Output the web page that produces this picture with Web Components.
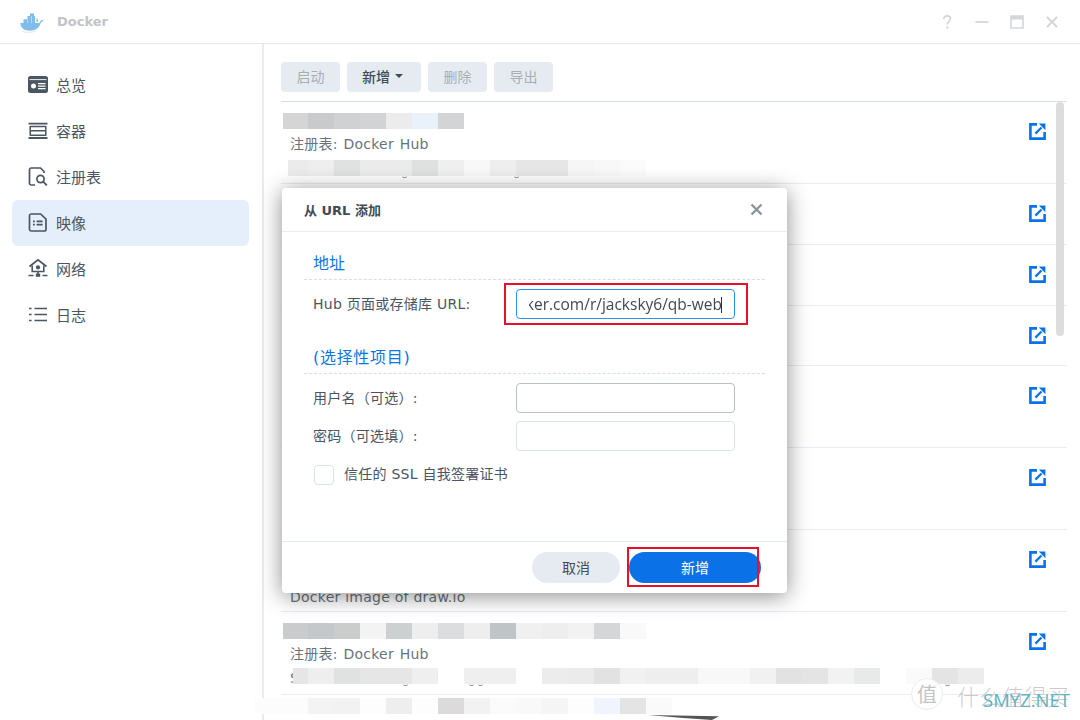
<!DOCTYPE html>
<html lang="zh">
<head>
<meta charset="utf-8">
<title>Docker</title>
<style>
  html, body { margin: 0; padding: 0; background: #fff; }
</style>
</head>
<body>
<docker-app>
  <dsm-titlebar slot="title"></dsm-titlebar>
  <dsm-sidebar slot="side">
    <nav-item icon="overview">总览</nav-item>
    <nav-item icon="container">容器</nav-item>
    <nav-item icon="registry">注册表</nav-item>
    <nav-item icon="image" active>映像</nav-item>
    <nav-item icon="network">网络</nav-item>
    <nav-item icon="log">日志</nav-item>
  </dsm-sidebar>
  <image-panel slot="main">
    <tool-btn disabled>启动</tool-btn>
    <tool-btn menu>新增</tool-btn>
    <tool-btn disabled>删除</tool-btn>
    <tool-btn disabled>导出</tool-btn>

    <image-row slot="rows" style="height:82px">
      <mosaic-bar slot="name" shift="-7" lead="25" cells="#d5d5d5,#c8cacc,#d0d1d2,#d2d3d4,#ececec,#e9f1fb,#d3d4d5"></mosaic-bar>
      <span slot="registry" style="word-spacing:1px">注册表: Docker Hub</span>
      <mosaic-bar slot="desc" shift="-2" lead="20" specks="114,226" cells="#ebebeb,#eeeeee,#e0e1e1,#ebebeb,#ebebeb,#dfe0e0,#efefef,#f8f8f8,#eeeeee,#e6e6e6,#e6e6e6,#f6f6f6,#f8f8f8,#fbfbfb"></mosaic-bar>
    </image-row>
    <image-row slot="rows" style="height:61px"></image-row>
    <image-row slot="rows" style="height:61px"></image-row>
    <image-row slot="rows" style="height:60px"></image-row>
    <image-row slot="rows" style="height:82px"></image-row>
    <image-row slot="rows" style="height:82px"></image-row>
    <image-row slot="rows" style="height:82px">
      <span slot="desc" style="display:block;padding-top:2px">Docker image of draw.io</span>
    </image-row>
    <image-row slot="rows" style="height:83px">
      <mosaic-bar slot="name" shift="-7" lead="25" style="margin-top:-1px" cells="#c9cbcc,#c4c8ca,#cbcdcd,#f3f3f3,#ccd0d1,#eeeeee,#dcddde,#eeeeee,#bfc4c6,#f0f0f0,#eeeeee,#f2f2f2,#d5d6d7,#f9f9f9"></mosaic-bar>
      <span slot="registry" style="word-spacing:1px">注册表: Docker Hub</span>
      <div slot="desc" style="display:flex">
        <span>S</span>
        <mosaic-bar shift="-6" lead="15" specks="110,176,185,640,652" cells="#e6e6e6,#eeeeee,#e0e2e2,#e6e6e6,#e6e6e6,#efefef,#ffffff,#efefef,#efefef,#ffffff,#ececec,#ebebeb,#e2e2e2,#f1f1f1,#eeeeee,#eeeeee,#f8f8f8,#f8f8f8,#f1f1f1,#e2e2e2,#e4e4e4,#f2f2f2,#e8e9e9,#ffffff,#fafafa,#e4e4e4,#ececec"></mosaic-bar>
      </div>
    </image-row>
    <mosaic-bar slot="rows" class="last" lead="53" cells="#fcfcfc,#f3f3f3,#f2f2f2,#fdfdfd,#eeeeee,#fdfdfd,#dcdadb,#f2f2f2,#fbfbfb,#f9f9f9,#f5f5f5,#fdfdfd,#f0f4fc,#e4e4e4,#fafafa"></mosaic-bar>
  </image-panel>
  <url-dialog slot="overlay"></url-dialog>
  <site-watermark slot="overlay"></site-watermark>
</docker-app>

<script>
const UI_FONT = `"DejaVu Sans", "Noto Sans CJK SC", sans-serif`;

const ICONS = {
  overview: `<rect x="1" y="2" width="20" height="17" rx="2.500" fill="#4b5663"/><path d="M2.500 5.600h17" stroke="#fff" stroke-width=".9" fill="none"/><circle cx="6.500" cy="12" r="2.500" fill="#fff"/><path d="M11 9.700h7.500M11 12.200h7.500M11 14.700h7.500" stroke="#fff" stroke-width="1.200" fill="none"/>`,
  container: `<path d="M1.500 3.600h19M1.500 18h19" stroke="#4b5663" stroke-width="1.800" fill="none"/><path d="M3.200 6v9.700M18.800 6v9.700" stroke="#4b5663" stroke-width="1.500" fill="none"/><path d="M3.200 6.500h15.600M3.200 10.800h15.600M3.200 15.200h15.600" stroke="#4b5663" stroke-width="1.600" fill="none"/>`,
  registry: `<path d="M8 19H4.200A1.700 1.700 0 0 1 2.500 17.300V3.700A1.700 1.700 0 0 1 4.200 2h9.300l3.500 3.500V7" fill="none" stroke="#4b5663" stroke-width="1.700"/><circle cx="13.500" cy="13" r="3.600" fill="none" stroke="#4b5663" stroke-width="1.700"/><path d="M16.200 15.700l3.600 3.600" stroke="#4b5663" stroke-width="1.900" fill="none"/>`,
  image: `<path d="M4.200 2h9.500L19 7.200v10.100a1.700 1.700 0 0 1-1.700 1.700H4.200a1.700 1.700 0 0 1-1.700-1.700V3.700A1.700 1.700 0 0 1 4.200 2z" fill="none" stroke="#4b5663" stroke-width="1.700"/><path d="M6 9.400h1.800M6 12.600h1.800M9.600 9.400h6M9.600 12.600h6" stroke="#4b5663" stroke-width="1.700" fill="none"/>`,
  network: `<path d="M2.500 8.500L11 1.800l8.500 6.700" fill="none" stroke="#4b5663" stroke-width="1.700"/><path d="M5.200 7.500v6h11.600v-6" fill="none" stroke="#4b5663" stroke-width="1.600"/><circle cx="11" cy="9.400" r="2.100" fill="#4b5663"/><path d="M11 13.500v3" stroke="#4b5663" stroke-width="1.700" fill="none"/><rect x="8.800" y="15.600" width="4.400" height="3.200" fill="#4b5663"/><path d="M1.500 17.400h5M15.500 17.400h5" stroke="#4b5663" stroke-width="1.500" fill="none"/>`,
  log: `<path d="M2 4.500h2.600M2 10.500h2.600M2 16.500h2.600M7.500 4.500h12.500M7.500 10.500h12.500M7.500 16.500h12.500" stroke="#4b5663" stroke-width="1.700" fill="none"/>`,
};

class DockerApp extends HTMLElement {
  constructor() {
    super();
    this.attachShadow({ mode: "open" });
  }
  connectedCallback() {
    this.shadowRoot.innerHTML = `
      <style>
        :host {
          display: flex;
          flex-direction: column;
          position: relative;
          width: 1080px;
          height: 720px;
          overflow: hidden;
          background: #fff;
          font-family: ${UI_FONT};
          color: #4a5561;
        }
        .body { display: flex; flex: 1; min-height: 0; }
      </style>
      <slot name="title"></slot>
      <div class="body">
        <slot name="side"></slot>
        <slot name="main"></slot>
      </div>
      <slot name="overlay"></slot>
    `;
  }
}

class DsmTitlebar extends HTMLElement {
  constructor() {
    super();
    this.attachShadow({ mode: "open" });
  }
  connectedCallback() {
    this.shadowRoot.innerHTML = `
      <style>
        :host {
          display: flex;
          align-items: center;
          box-sizing: border-box;
          height: 44px;
          padding: 0 21px 0 19px;
          border-bottom: 1px solid #e4e9f0;
        }
        .logo { width: 26px; height: 22px; margin-right: 12px; filter: blur(.4px); }
        .name { font-size: 13px; font-weight: 700; color: #bfc4c9; flex: 1; }
        .ctl { display: flex; gap: 21px; align-items: center; }
        .ctl svg { width: 14px; height: 14px; display: block; }
      </style>
      <svg class="logo" viewBox="0 0 26 22">
        <g fill="#80bdea">
          <path d="M1.200 12h18.600c.9-.2 1.500-.9 1.600-1.900.3-.9 1.400-.8 3.400-1.300-.6 1-1.800 2-3 2.900-1.300 4.900-5.200 8-11 8-5.400 0-8.700-2.200-9.600-7.700z"/>
          <path d="M4.500 8.200h3.600V12H4.500zM8.500 8.200h3.600V12H8.500zM12.500 8.200h3.600V12h-3.600zM8.500 5h3.600v3.200H8.500zM12.500 5h3.600v3.200h-3.600zM11 2.500h4v2.500h-4z"/>
          <path d="M17.500 7c1 .6 1.700 1.800 1.700 3.500l-1.700.8z"/>
        </g>
        <path d="M3 20.200c3 1.300 10 1.500 13.500 0" stroke="#e3e8ec" stroke-width="1.200" fill="none"/>
      </svg>
      <span class="name">Docker</span>
      <div class="ctl">
        <svg viewBox="0 0 14 14"><path d="M3.600 4.200C3.800 2.200 5.300 .8 7.200 .8c2 0 3.300 1.300 3.300 3 0 2.500-3.200 2.800-3.200 5.700" fill="none" stroke="#d4d7da" stroke-width="1.700"/><rect x="6.300" y="11.400" width="2" height="2.200" fill="#d4d7da"/></svg>
        <svg viewBox="0 0 14 14"><path d="M.5 7h13" stroke="#d4d7da" stroke-width="1.800"/></svg>
        <svg viewBox="0 0 14 14"><path d="M1 1h12v12H1z" fill="none" stroke="#d4d7da" stroke-width="1.600"/><rect x="1" y="1" width="12" height="3.500" fill="#d4d7da"/></svg>
        <svg viewBox="0 0 14 14"><path d="M2 2l10 10M12 2L2 12" stroke="#d4d7da" stroke-width="2"/></svg>
      </div>
    `;
  }
}

class DsmSidebar extends HTMLElement {
  constructor() {
    super();
    this.attachShadow({ mode: "open" });
  }
  connectedCallback() {
    this.shadowRoot.innerHTML = `
      <style>
        :host {
          display: flex;
          flex-direction: column;
          box-sizing: border-box;
          width: 264px;
          flex: none;
          padding: 18px 13px 0 12px;
          border-right: 2px solid #e7ecf2;
        }
      </style>
      <slot></slot>
    `;
  }
}

class NavItem extends HTMLElement {
  constructor() {
    super();
    this.attachShadow({ mode: "open" });
  }
  connectedCallback() {
    const icon = ICONS[this.getAttribute("icon")];
    this.shadowRoot.innerHTML = `
      <style>
        :host {
          display: flex;
          align-items: center;
          box-sizing: border-box;
          height: 46px;
          padding: 0 0 2px 15px;
          border-radius: 6px;
          font-size: 15px;
          color: #4a5561;
        }
        :host([active]) { background: #e4effb; }
        svg { width: 22px; height: 21px; margin-right: 7px; flex: none; }
      </style>
      <svg viewBox="0 0 22 21">${icon}</svg>
      <slot></slot>
    `;
  }
}

class ImagePanel extends HTMLElement {
  constructor() {
    super();
    this.attachShadow({ mode: "open" });
  }
  connectedCallback() {
    this.shadowRoot.innerHTML = `
      <style>
        :host {
          display: flex;
          flex-direction: column;
          position: relative;
          flex: 1;
          min-width: 0;
          padding: 0 13px 0 17px;
        }
        .toolbar {
          display: flex;
          gap: 7px;
          box-sizing: border-box;
          height: 58px;
          padding-top: 18px;
          border-bottom: 1px solid #d6e0ea;
        }
        .scroll {
          position: absolute;
          left: 792px;
          top: 58px;
          width: 8px;
          height: 234px;
          border-radius: 4px;
          background: #dddddd;
        }
      </style>
      <div class="toolbar"><slot></slot></div>
      <slot name="rows"></slot>
      <div class="scroll"></div>
    `;
  }
}

class ToolBtn extends HTMLElement {
  constructor() {
    super();
    this.attachShadow({ mode: "open" });
  }
  connectedCallback() {
    this.shadowRoot.innerHTML = `
      <style>
        :host {
          display: flex;
          align-items: center;
          justify-content: center;
          gap: 5px;
          box-sizing: border-box;
          width: 59px;
          height: 30px;
          padding-bottom: 2px;
          background: #e6ebf2;
          border-radius: 4px;
          font-size: 14px;
          font-weight: 500;
          color: #404b57;
        }
        :host([disabled]) { color: #a8aeb6; font-weight: 400; }
        :host([menu]) { width: 74px; padding-right: 3px; }
        .caret { display: none; width: 0; height: 0; border: 4px solid transparent; border-top: 4px solid #404b57; border-bottom: 0; }
        :host([menu]) .caret { display: block; }
      </style>
      <slot></slot><span class="caret"></span>
    `;
  }
}

class ImageRow extends HTMLElement {
  constructor() {
    super();
    this.attachShadow({ mode: "open" });
  }
  connectedCallback() {
    this.shadowRoot.innerHTML = `
      <style>
        :host {
          display: flex;
          box-sizing: border-box;
          padding: 11px 21px 0 9px;
          border-bottom: 1px solid #e8edf3;
          font-size: 14px;
          letter-spacing: .25px;
          color: #6a737c;
        }
        .text {
          flex: 1;
          min-width: 0;
          display: grid;
          grid-template-rows: 16px 20px 17px;
          row-gap: 5px;
          line-height: 20px;
          align-content: start;
          align-items: center;
        }
        svg { width: 17px; height: 17px; margin-top: 9.5px; flex: none; }
      </style>
      <div class="text">
        <div><slot name="name"></slot></div>
        <div><slot name="registry"></slot></div>
        <div><slot name="desc"></slot></div>
      </div>
      <svg viewBox="0 0 17 17">
        <path d="M8 1.400H1.400v14.200h14.200V9" fill="none" stroke="#0a72e6" stroke-width="2.600"/>
        <path d="M6.400 10.600L12.500 4.500" fill="none" stroke="#0a72e6" stroke-width="2.200"/>
        <path d="M9.800 .6h6.600v6.600z" fill="#0a72e6"/>
      </svg>
    `;
  }
}

// redaction blocks: cells sit on a 26px grid, like the pixelated patch in the shot
class MosaicBar extends HTMLElement {
  constructor() {
    super();
    this.attachShadow({ mode: "open" });
  }
  connectedCallback() {
    const lead = Number(this.getAttribute("lead") || 26);
    const shift = Number(this.getAttribute("shift") || 0);
    const cells = this.getAttribute("cells").split(",");
    const specks = (this.getAttribute("specks") || "").split(",").filter(Boolean);
    const spans = cells
      .map((c, i) => `<i style="background:${c};width:${i === 0 ? lead : 26}px"></i>`)
      .join("");
    const bits = specks.map((x) => `<b style="left:${x}px"></b>`).join("");
    this.shadowRoot.innerHTML = `
      <style>
        :host {
          display: flex;
          position: relative;
          height: 16px;
          margin-left: ${shift}px;
          filter: blur(.5px);
        }
        :host(.last) {
          position: absolute;
          left: -9px;
          top: 654px;
          margin: 0;
          z-index: 1;
        }
        i { display: block; flex: none; height: 100%; }
        i:first-child { border-radius: 8px 0 0 8px; }
        b {
          position: absolute;
          top: 100%;
          width: 5px;
          height: 2px;
          box-sizing: border-box;
          border-bottom: 1px solid #8a8f94;
          border-radius: 0 0 3px 3px;
        }
      </style>
      ${spans}${bits}
    `;
  }
}

class UrlDialog extends HTMLElement {
  constructor() {
    super();
    this.attachShadow({ mode: "open" });
  }
  connectedCallback() {
    this.shadowRoot.innerHTML = `
      <style>
        :host {
          position: absolute;
          left: 282px;
          top: 188px;
          width: 505px;
          height: 405px;
          z-index: 2;
          display: flex;
          flex-direction: column;
          background: #fff;
          border-radius: 4px;
          box-shadow: 0 3px 22px rgba(0, 0, 0, .45);
          color: #4a5561;
        }
        header {
          display: flex;
          align-items: center;
          justify-content: space-between;
          box-sizing: border-box;
          height: 44px;
          padding: 0 24px 0 22px;
          border-bottom: 1px solid #e8edf3;
          font-size: 13px;
          font-weight: 600;
          color: #3f4a56;
        }
        header svg { width: 13px; height: 13px; }
        main { flex: 1; padding: 19px 22px 0 22px; }
        h3 {
          margin: 0;
          height: 29px;
          box-sizing: border-box;
          padding-left: 9px;
          border-bottom: 1px dashed #d5dfe9;
          font-size: 16px;
          line-height: 26px;
          font-weight: 400;
          color: #0a76e4;
        }
        .field {
          display: flex;
          align-items: center;
          height: 30px;
          padding-left: 9px;
          font-size: 14px;
          letter-spacing: .25px;
          margin-top: 8px;
        }
        .field label { width: 203px; flex: none; padding-bottom: 2px; }
        .box {
          position: relative;
          box-sizing: border-box;
          width: 219px;
          height: 30px;
          border: 1px solid #d8e3ee;
          border-radius: 4px;
        }
        .box.gray { border-color: #b9bfc6; }
        .box.focus { border-color: #2f8fee; }
        .clip {
          position: absolute;
          right: 12px;
          top: 0;
          bottom: 0;
          display: flex;
          align-items: center;
          font-family: "Open Sans", sans-serif;
          font-size: 15.500px;
          letter-spacing: 0;
          color: #3f4a56;
          white-space: nowrap;
          -webkit-mask-image: linear-gradient(to right, transparent 3px, #000 3px);
          mask-image: linear-gradient(to right, transparent 3px, #000 3px);
        }
        .caret { position: absolute; right: 12px; top: 7px; width: 1px; height: 16px; background: #333; }
        .mark { position: absolute; border: 2px solid #e8112b; box-sizing: border-box; }
        .url-mark { left: -13px; top: -7px; width: 244px; height: 42px; }
        .check { display: flex; align-items: center; gap: 10px; padding-left: 10px; margin-top: 12px; font-size: 14px; letter-spacing: .25px; }
        .check span { padding-bottom: 4px; }
        .check i { display: block; width: 20px; height: 20px; box-sizing: border-box; border: 1px solid #d8e3ee; border-radius: 4px; }
        footer {
          position: relative;
          display: flex;
          gap: 9px;
          box-sizing: border-box;
          height: 52px;
          padding: 10px 0 0 250px;
          border-top: 1px solid #e3e9f0;
          font-size: 14px;
        }
        .btn {
          display: flex;
          align-items: center;
          justify-content: center;
          box-sizing: border-box;
          height: 31px;
          padding-bottom: 2px;
          border-radius: 16px;
        }
        .cancel { width: 88px; background: #e6ebf2; color: #404b57; }
        .ok { width: 132px; background: #0a72e6; color: #fff; }
        .ok-mark { left: 345px; top: 5px; width: 132px; height: 40px; }
      </style>
      <header>
        <span>从 URL 添加</span>
        <svg viewBox="0 0 13 13"><path d="M1.500 1.500l10 10M11.500 1.500l-10 10" stroke="#8d949c" stroke-width="2.400"/></svg>
      </header>
      <main>
        <h3>地址</h3>
        <div class="field" style="margin-top:9px">
          <label>Hub 页面或存储库 URL:</label>
          <div class="box focus">
            <div class="clip"><span>ker.com/r/jacksky6/qb-web</span></div>
            <div class="caret"></div>
            <div class="mark url-mark"></div>
          </div>
        </div>
        <h3 style="margin-top:26px;letter-spacing:.7px">(选择性项目)</h3>
        <div class="field" style="margin-top:9px">
          <label>用户名（可选）:</label>
          <div class="box gray"></div>
        </div>
        <div class="field">
          <label>密码（可选填）:</label>
          <div class="box"></div>
        </div>
        <div class="check"><i></i><span>信任的 SSL 自我签署证书</span></div>
      </main>
      <footer>
        <div class="btn cancel">取消</div>
        <div class="btn ok">新增</div>
        <div class="mark ok-mark"></div>
      </footer>
    `;
  }
}

class SiteWatermark extends HTMLElement {
  constructor() {
    super();
    this.attachShadow({ mode: "open" });
  }
  connectedCallback() {
    this.shadowRoot.innerHTML = `
      <style>
        :host {
          position: absolute;
          left: 0;
          top: 0;
          width: 1080px;
          height: 720px;
          z-index: 3;
          pointer-events: none;
          font-family: "Noto Sans CJK SC", sans-serif;
        }
        .seal {
          position: absolute;
          left: 911px;
          top: 678px;
          width: 32px;
          height: 32px;
          box-sizing: border-box;
          border: 1px solid #ececec;
          border-radius: 50%;
          background: rgba(255, 255, 255, .85);
          text-align: center;
          font-size: 20px;
          line-height: 30px;
          color: #c4c4c4;
        }
        .brand {
          position: absolute;
          left: 957px;
          top: 680px;
          font-size: 22px;
          line-height: 30px;
          letter-spacing: .5px;
          font-weight: 300;
          color: rgba(180, 180, 180, .7);
          white-space: nowrap;
        }
        .site {
          position: absolute;
          left: 983px;
          top: 687px;
          font-family: "Open Sans", sans-serif;
          font-size: 18.500px;
          line-height: 26px;
          color: #62b1c2;
          white-space: nowrap;
        }
        .sliver {
          position: absolute;
          left: 648px;
          top: 715px;
          width: 71px;
          height: 5px;
          background: #55545a;
          clip-path: polygon(0 0, 100% 25%, 90% 100%, 50% 60%);
        }
      </style>
      <div class="seal">值</div>
      <div class="brand">什么值得买</div>
      <div class="site">SMYZ.NET</div>
      <div class="sliver"></div>
    `;
  }
}

customElements.define("docker-app", DockerApp);
customElements.define("dsm-titlebar", DsmTitlebar);
customElements.define("dsm-sidebar", DsmSidebar);
customElements.define("nav-item", NavItem);
customElements.define("image-panel", ImagePanel);
customElements.define("tool-btn", ToolBtn);
customElements.define("image-row", ImageRow);
customElements.define("mosaic-bar", MosaicBar);
customElements.define("url-dialog", UrlDialog);
customElements.define("site-watermark", SiteWatermark);
</script>
</body>
</html>
